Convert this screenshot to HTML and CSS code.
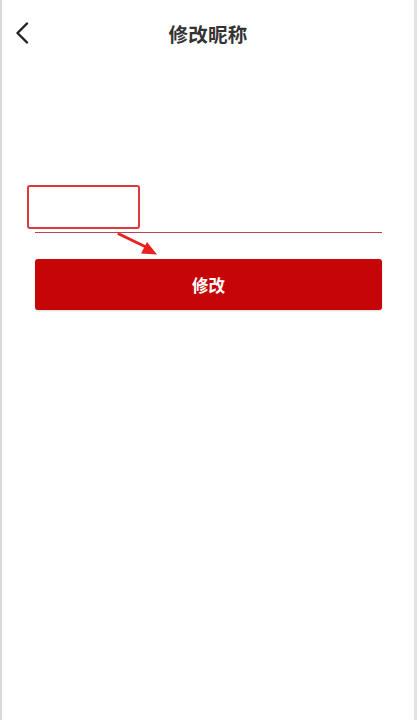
FILE: index.html
```html
<!DOCTYPE html>
<html lang="zh-CN">
<head>
<meta charset="utf-8">
<title>修改昵称</title>
<link rel="stylesheet" href="styles.css">
</head>
<body>
<div class="page">
  <header class="nav">
    <button class="back" aria-label="返回">
      <svg width="14" height="22" viewBox="0 0 14 22"><path d="M12 1.5 L2.5 11 L12 20.5" fill="none" stroke="#222" stroke-width="2.4" stroke-linecap="round" stroke-linejoin="round"/></svg>
    </button>
    <h1 class="title">修改昵称</h1>
  </header>
  <main class="form">
    <div class="field">
      <input class="input" type="text" value="">
    </div>
    <button class="submit">修改</button>
    <div class="mark-box"></div>
    <svg class="mark-arrow" width="50" height="30" viewBox="0 0 50 30">
      <path d="M2 2 L30 15.5" stroke="#e8211e" stroke-width="3" stroke-linecap="round"/>
      <path d="M40 22.5 L24 21.5 L30 10 Z" fill="#e8211e"/>
    </svg>
  </main>
</div>
</body>
</html>
```

FILE: styles.css
```css
html, body {
  margin: 0;
  padding: 0;
  background: #fff;
}
body {
  font-family: "Noto Sans CJK SC", "Noto Sans", sans-serif;
}
.page {
  position: relative;
  height: 720px;
  box-sizing: border-box;
  border-left: 2px solid #d8d8d8;
  border-right: 3px solid #e2e2e2;
  background: #fff;
}
.nav {
  position: relative;
  height: 66px;
  display: flex;
  align-items: center;
  justify-content: center;
}
.back {
  position: absolute;
  left: 13px;
  top: 22px;
  padding: 0;
  border: 0;
  background: none;
  display: flex;
}
.title {
  margin: 0;
  font-size: 19.5px;
  font-weight: 700;
  color: #333;
  letter-spacing: 0.3px;
}
.form {
  position: relative;
  padding: 129px 32px 0 33px;
}
.field {
  border-bottom: 1.5px solid #b94452;
  height: 37px;
}
.input {
  width: 100%;
  height: 100%;
  box-sizing: border-box;
  border: 0;
  outline: none;
  background: transparent;
  font-size: 16px;
}
.submit {
  display: block;
  width: 100%;
  height: 51px;
  margin-top: 26px;
  border: 0;
  border-radius: 3px;
  background: #c60606;
  color: #fff;
  font-family: "Noto Sans CJK SC", "Noto Sans", sans-serif;
  font-size: 16.5px;
  font-weight: 700;
  box-shadow: 0 1px 2px rgba(0,0,0,0.15);
}
.mark-box {
  position: absolute;
  left: 25px;
  top: 119px;
  width: 109px;
  height: 40px;
  border: 2px solid #e0383a;
  border-radius: 3px;
}
.mark-arrow {
  position: absolute;
  left: 115px;
  top: 166px;
}
```
